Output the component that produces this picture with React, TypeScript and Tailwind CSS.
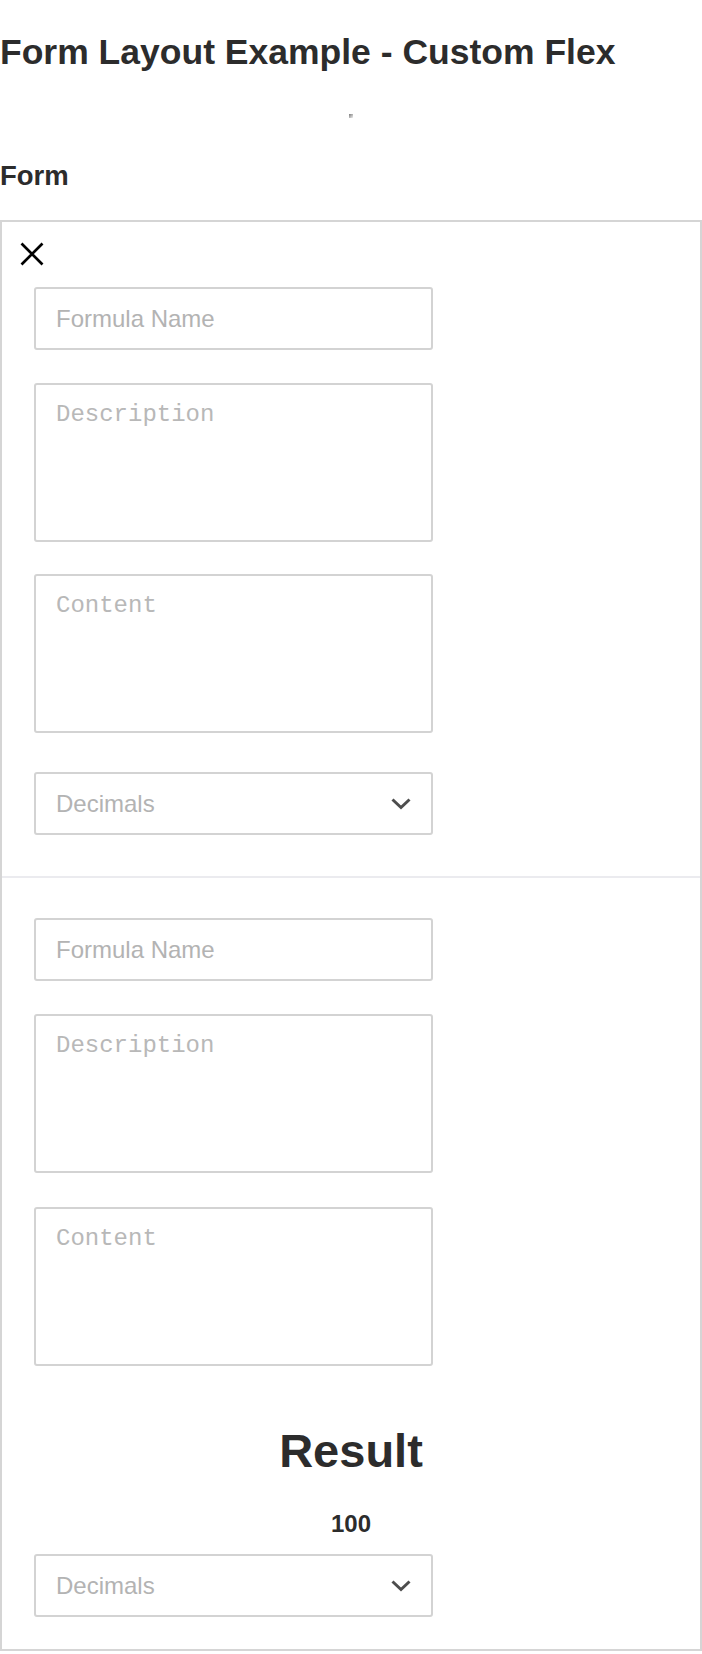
import React from "react";

const inputCls =
  "block h-[63px] w-[399px] rounded-[3px] border-2 border-[#d3d3d3] bg-white px-[20px] text-[24px] text-[#333] outline-none placeholder:text-[#b3b3b3] font-['Liberation_Sans',Arial,sans-serif]";
const areaCls =
  "block h-[159px] w-[399px] resize-none rounded-[3px] border-2 border-[#d3d3d3] bg-white px-[20px] pt-[16px] text-[24px] leading-[28px] text-[#333] outline-none placeholder:text-[#b8b8b8] font-['Courier_New','Nimbus_Mono_PS','Liberation_Mono',monospace]";

function Chevron() {
  return (
    <svg width="20" height="12" viewBox="0 0 20 12" fill="none">
      <path d="M1.5 1.5 L10 9.5 L18.5 1.5" stroke="#4d4d4d" strokeWidth="3" strokeLinecap="butt" strokeLinejoin="miter" />
    </svg>
  );
}

function Decimals({ className }: { className: string }) {
  return (
    <div
      className={
        "flex h-[63px] w-[399px] items-center justify-between rounded-[3px] border-2 border-[#d3d3d3] bg-white pl-[20px] pr-[20px] text-[24px] text-[#b3b3b3] font-['Liberation_Sans',Arial,sans-serif] " +
        className
      }
    >
      <span>Decimals</span>
      <Chevron />
    </div>
  );
}

export default function App() {
  return (
    <div className="min-h-[1654px] w-[702px] bg-white text-[#2c2c2c] font-['Liberation_Sans',Arial,sans-serif]">
      <h1 className="pt-[34px] text-[35.5px] font-bold leading-[36px]">Form Layout Example - Custom Flex</h1>
      <div className="mt-[44px] flex justify-center">
        <div className="h-[4px] w-[4px] bg-linear-to-br from-[#7a7a7a] to-[#f2f2f2]" />
      </div>
      <h2 className="mt-[44px] text-[27.5px] font-bold leading-[28px]">Form</h2>
      <div className="mt-[30px] w-[702px] border-2 border-[#d5d5d5]">
        <div className="pb-[41px] pt-[20px]">
          <svg className="ml-[18px] block" width="24" height="24" viewBox="0 0 24 24">
            <path d="M1.5 1.5 L22.5 22.5 M22.5 1.5 L1.5 22.5" stroke="#000" strokeWidth="2.7" />
          </svg>
          <div className="ml-[32px] mt-[21px]">
            <input className={inputCls} placeholder="Formula Name" />
            <textarea className={areaCls + " mt-[33px]"} placeholder="Description" />
            <textarea className={areaCls + " mt-[32px]"} placeholder="Content" />
            <Decimals className="mt-[39px]" />
          </div>
        </div>
        <div className="h-[2px] bg-[#ebebef]" />
        <div className="pb-[32px] pt-[40px]">
          <div className="ml-[32px]">
            <input className={inputCls} placeholder="Formula Name" />
            <textarea className={areaCls + " mt-[33px]"} placeholder="Description" />
            <textarea className={areaCls + " mt-[34px]"} placeholder="Content" />
          </div>
          <div className="mt-[61px] text-center text-[47px] font-bold leading-[48px]">Result</div>
          <div className="mt-[37px] text-center text-[24px] font-bold leading-[24px]">100</div>
          <div className="ml-[32px] mt-[18px]">
            <Decimals className="" />
          </div>
        </div>
      </div>
    </div>
  );
}
